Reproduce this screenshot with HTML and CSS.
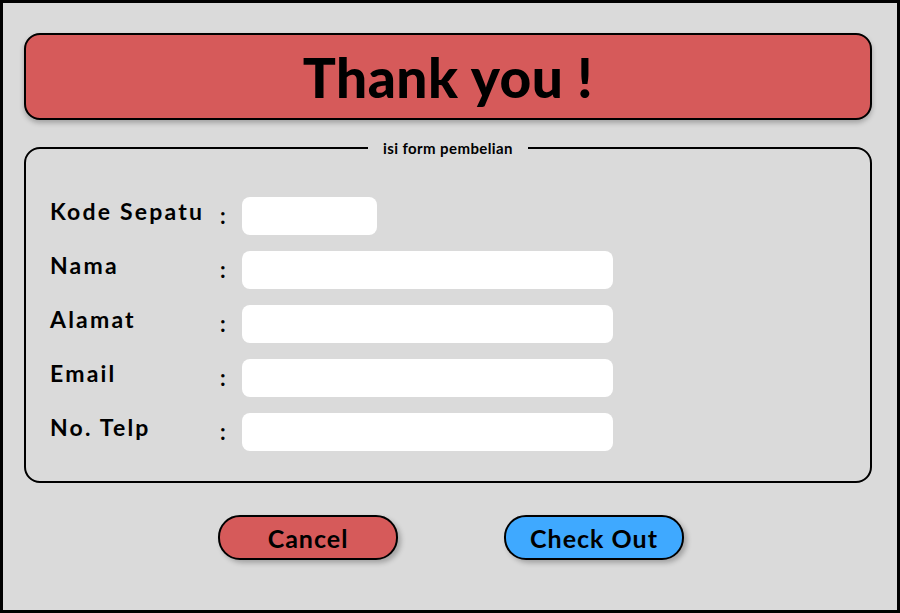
FILE: index.html
```html
<!DOCTYPE html>
<html lang="en">
<head>
    <meta charset="UTF-8">
    <meta name="viewport" content="width=device-width, initial-scale=1.0">
    <title>Thank you</title>
    <link rel="stylesheet" href="styles.css">
</head>
<body>
    <div class="frame">
        <header class="banner">
            <h1>Thank you !</h1>
        </header>
        <form class="order-form">
            <fieldset class="fields">
                <legend>isi form pembelian</legend>
                <div class="row">
                    <label for="kode">Kode Sepatu</label>
                    <span class="colon">:</span>
                    <input type="text" id="kode" class="short">
                </div>
                <div class="row">
                    <label for="nama">Nama</label>
                    <span class="colon">:</span>
                    <input type="text" id="nama">
                </div>
                <div class="row">
                    <label for="alamat">Alamat</label>
                    <span class="colon">:</span>
                    <input type="text" id="alamat">
                </div>
                <div class="row">
                    <label for="email">Email</label>
                    <span class="colon">:</span>
                    <input type="text" id="email">
                </div>
                <div class="row">
                    <label for="telp">No. Telp</label>
                    <span class="colon">:</span>
                    <input type="text" id="telp">
                </div>
            </fieldset>
            <div class="actions">
                <button type="button" class="btn cancel">Cancel</button>
                <button type="button" class="btn checkout">Check Out</button>
            </div>
        </form>
    </div>
</body>
</html>
```

FILE: styles.css
```css
body {
    margin: 0;
    font-family: 'Lato', 'Liberation Sans', sans-serif;
    color: #000;
}

.frame {
    box-sizing: border-box;
    width: 900px;
    height: 613px;
    border: 3px solid #000;
    background: #dadada;
    padding: 30px 25px 0 21px;
}

.banner {
    box-sizing: border-box;
    height: 87px;
    border: 2px solid #000;
    border-radius: 16px;
    background: #d65a5a;
    box-shadow: 0 3px 5px rgba(0, 0, 0, 0.25);
    display: flex;
    align-items: center;
    justify-content: center;
}

.banner h1 {
    margin: 0;
    font-size: 55px;
    font-weight: 900;
    letter-spacing: 0.5px;
}

.order-form {
    margin-top: 19px;
}

.fields {
    margin: 0;
    border: 2px solid #000;
    border-radius: 16px;
    padding: 40px 24px 30px 24px;
}

.fields legend {
    margin: 0 auto;
    padding: 0 15px;
    font-size: 15px;
    font-weight: 700;
    letter-spacing: 0.4px;
}

.row {
    display: grid;
    grid-template-columns: 169px 23px 1fr;
    align-items: start;
    margin-bottom: 16px;
}

.row:last-child {
    margin-bottom: 0;
}

.row label {
    font-size: 23px;
    font-weight: 700;
    letter-spacing: 2.2px;
}

.colon {
    font-size: 22px;
    font-weight: 700;
    padding-top: 5px;
    padding-left: 1px;
}

.row input {
    box-sizing: border-box;
    width: 371px;
    height: 38px;
    border: none;
    border-radius: 8px;
    background: #fff;
}

.row input.short {
    width: 135px;
}

.actions {
    display: flex;
    justify-content: center;
    gap: 106px;
    margin-top: 32px;
    padding-left: 6px;
}

.btn {
    box-sizing: border-box;
    width: 180px;
    height: 45px;
    border: 2px solid #000;
    border-radius: 22px;
    font-family: inherit;
    font-size: 25px;
    font-weight: 700;
    letter-spacing: 1px;
    color: #000;
    box-shadow: 3px 3px 5px rgba(0, 0, 0, 0.25);
    cursor: pointer;
}

.cancel {
    background: #d65a5a;
}

.checkout {
    background: #3fa9ff;
}
```
